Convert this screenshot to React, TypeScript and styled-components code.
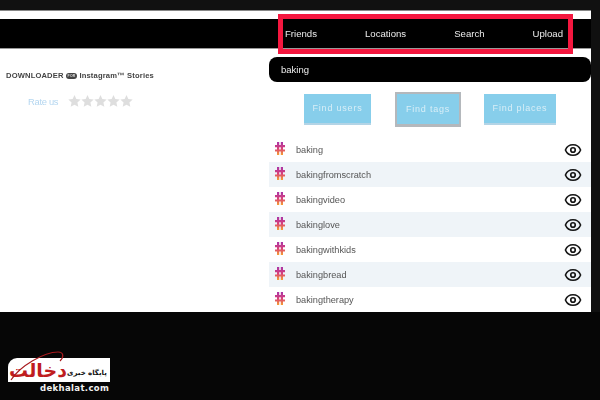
import React from "react";
import styled, { createGlobalStyle } from "styled-components";
import { Eye } from "lucide-react";

const GlobalStyle = createGlobalStyle`
  html, body {
    margin: 0;
    padding: 0;
    width: 600px;
    height: 400px;
    overflow: hidden;
    background: #050505;
    font-family: "Liberation Sans", sans-serif;
  }
`;

const Screen = styled.div`
  position: relative;
  width: 600px;
  height: 400px;
  display: flex;
  flex-direction: column;
  background: #060606;
`;

const TopStrip = styled.div`
  height: 20px;
  margin-bottom: -10px;
  background: #111;
  flex: none;
`;

const Stage = styled.div`
  display: flex;
  height: 302px;
  flex: none;
  background: #101010;
`;

const Sheet = styled.div`
  position: relative;
  width: 591px;
  height: 302px;
  background: #fff;
  border-top: 1px solid #888;
  box-sizing: border-box;
  padding-top: 8px;
  display: flex;
  flex-direction: column;
  overflow: hidden;
`;

const Header = styled.header`
  height: 30px;
  flex: none;
  background: #000;
  border-bottom: 1px solid #999;
  box-sizing: border-box;
  padding: 0 28px 0 285px;
  display: flex;
  align-items: center;
  justify-content: space-between;
`;

const NavItem = styled.span`
  color: #ececec;
  font-size: 9.6px;
  filter: blur(0.3px);
`;

const Highlight = styled.div`
  position: absolute;
  left: 278px;
  top: 3px;
  width: 295px;
  height: 40px;
  box-sizing: border-box;
  border: 5px solid #f5173f;
`;

const Columns = styled.div`
  flex: 1;
  display: flex;
  min-height: 0;
`;

const Intro = styled.section`
  width: 269px;
  flex: none;
  padding: 22px 0 0 6px;
  box-sizing: border-box;
`;

const Title = styled.div`
  display: flex;
  align-items: center;
  gap: 2px;
  color: #444;
  font-size: 7.6px;
  font-weight: 700;
  letter-spacing: 0.15px;
  white-space: nowrap;
  filter: blur(0.3px);
`;

const ForBadge = styled.span`
  background: #444;
  color: #ddd;
  font-size: 3.5px;
  border-radius: 3px;
  padding: 1px 2px;
`;

const Rating = styled.div`
  display: flex;
  align-items: center;
  gap: 10px;
  margin: 14px 0 0 22px;
`;

const RateLabel = styled.span`
  color: #b4d6f0;
  font-size: 9.4px;
  letter-spacing: -0.3px;
  filter: blur(0.3px);
`;

const Stars = styled.div`
  display: flex;
`;

const Results = styled.section`
  flex: 1;
  display: flex;
  flex-direction: column;
  min-width: 0;
`;

const SearchBar = styled.div`
  height: 25px;
  margin-top: 8px;
  flex: none;
  background: #000;
  border-radius: 8px;
  box-sizing: border-box;
  padding-left: 12px;
  display: flex;
  align-items: center;
  color: #eee;
  font-size: 9.5px;
  filter: blur(0.2px);
`;

const Buttons = styled.div`
  height: 55px;
  flex: none;
  display: flex;
  align-items: center;
  padding-left: 35px;
`;

const FindButton = styled.button<{ $w: number; $active?: boolean; $gap: number }>`
  width: ${(p) => p.$w}px;
  height: ${(p) => (p.$active ? 35 : 31)}px;
  margin-right: ${(p) => p.$gap}px;
  padding: 0 0 1px;
  background: #87ceeb;
  color: #d8eef7;
  font-family: "Liberation Sans", sans-serif;
  font-size: 9px;
  letter-spacing: 0.8px;
  border: ${(p) => (p.$active ? "2px solid #b4b8bc" : "none")};
  border-bottom: ${(p) => (p.$active ? "3px solid #b4b8bc" : "2px solid #b3d4e6")};
  box-sizing: border-box;
  filter: blur(0.3px);
`;

const List = styled.div`
  display: flex;
  flex-direction: column;
`;

const Row = styled.div<{ $striped: boolean }>`
  height: 25px;
  flex: none;
  box-sizing: border-box;
  padding: 0 9px 0 5px;
  display: flex;
  align-items: center;
  background: ${(p) => (p.$striped ? "#eff4f8" : "#fff")};
`;

const HashGlyph = styled.svg`
  margin-top: -3px;
  flex: none;
`;

const TagName = styled.span`
  flex: 1;
  margin-left: 10px;
  color: #555;
  font-size: 9.2px;
  filter: blur(0.3px);
`;

const Footer = styled.footer`
  flex: 1;
  padding: 46px 0 0 8px;
`;

const Logo = styled.div`
  position: relative;
  width: 102px;
  height: 24px;
  background: #fff;
  border-radius: 9px 0 0 0;
  display: flex;
  align-items: center;
`;

const LogoMark = styled.span`
  color: #bf1c20;
  font-family: "DejaVu Sans", sans-serif;
  font-size: 19px;
  font-weight: 700;
  line-height: 24px;
  margin-left: 1px;
  width: 58px;
  text-align: center;
  white-space: nowrap;
`;

const LogoTagline = styled.span`
  color: #111;
  font-family: "DejaVu Sans", sans-serif;
  font-size: 7px;
  font-weight: 700;
  margin-top: 6px;
  white-space: nowrap;
`;

const LogoSwoosh = styled.svg`
  position: absolute;
  left: 0;
  top: -8px;
`;

const LogoDomain = styled.div`
  margin: 0 0 0 32px;
  color: #f2f2f2;
  font-family: "DejaVu Sans", sans-serif;
  font-size: 8.5px;
  font-weight: 700;
  letter-spacing: 0.35px;
  line-height: 12px;
`;

const HashIcon = () => (
  <HashGlyph width="12" height="15" viewBox="0 0 12 15">
    <defs>
      <linearGradient id="hashGrad" x1="0" y1="0" x2="0" y2="1">
        <stop offset="0" stopColor="#a835a8" />
        <stop offset="0.5" stopColor="#d8407a" />
        <stop offset="1" stopColor="#f7a030" />
      </linearGradient>
    </defs>
    <path
      d="M3 1H5.200V4H6.800V1H9V4H11V6.200H9V8.400H11V10.600H9V14H6.800V10.600H5.200V14H3V10.600H1V8.400H3V6.200H1V4H3ZM5.200 6.200V8.400H6.800V6.200Z"
      fill="url(#hashGrad)"
      fillRule="evenodd"
    />
  </HashGlyph>
);

const Star = () => (
  <svg width="13" height="14" viewBox="0 0 24 24">
    <path d="M12 1l3.400 7.400 8 .9-6 5.400 1.700 8L12 18.700 4.900 22.700l1.700-8-6-5.400 8-.9z" fill="#dedede" />
  </svg>
);

const tags = [
  "baking",
  "bakingfromscratch",
  "bakingvideo",
  "bakinglove",
  "bakingwithkids",
  "bakingbread",
  "bakingtherapy",
];

export default function App() {
  return (
    <Screen>
      <GlobalStyle />
      <TopStrip />
      <Stage>
        <Sheet>
          <Header>
            <NavItem>Friends</NavItem>
            <NavItem>Locations</NavItem>
            <NavItem>Search</NavItem>
            <NavItem>Upload</NavItem>
          </Header>
          <Highlight />
          <Columns>
            <Intro>
              <Title>
                DOWNLOADER <ForBadge>FOR</ForBadge> Instagram™ Stories
              </Title>
              <Rating>
                <RateLabel>Rate us</RateLabel>
                <Stars>
                  <Star />
                  <Star />
                  <Star />
                  <Star />
                  <Star />
                </Stars>
              </Rating>
            </Intro>
            <Results>
              <SearchBar>baking</SearchBar>
              <Buttons>
                <FindButton $w={67} $gap={24}>Find users</FindButton>
                <FindButton $w={66} $gap={23} $active>Find tags</FindButton>
                <FindButton $w={72} $gap={0}>Find places</FindButton>
              </Buttons>
              <List>
                {tags.map((tag, i) => (
                  <Row key={tag} $striped={i % 2 === 1}>
                    <HashIcon />
                    <TagName>{tag}</TagName>
                    <Eye size={18} strokeWidth={2.2} color="#151515" />
                  </Row>
                ))}
              </List>
            </Results>
          </Columns>
        </Sheet>
      </Stage>
      <Footer>
        <Logo>
          <LogoSwoosh width="60" height="34" viewBox="0 0 60 34">
            <path d="M3 30C12 16 36 2 50 2c6 0 6 5 2 9" fill="none" stroke="#a81a1e" strokeWidth="1.2" />
          </LogoSwoosh>
          <LogoMark>دخالت</LogoMark>
          <LogoTagline>پایگاه خبری</LogoTagline>
        </Logo>
        <LogoDomain>dekhalat.com</LogoDomain>
      </Footer>
    </Screen>
  );
}
